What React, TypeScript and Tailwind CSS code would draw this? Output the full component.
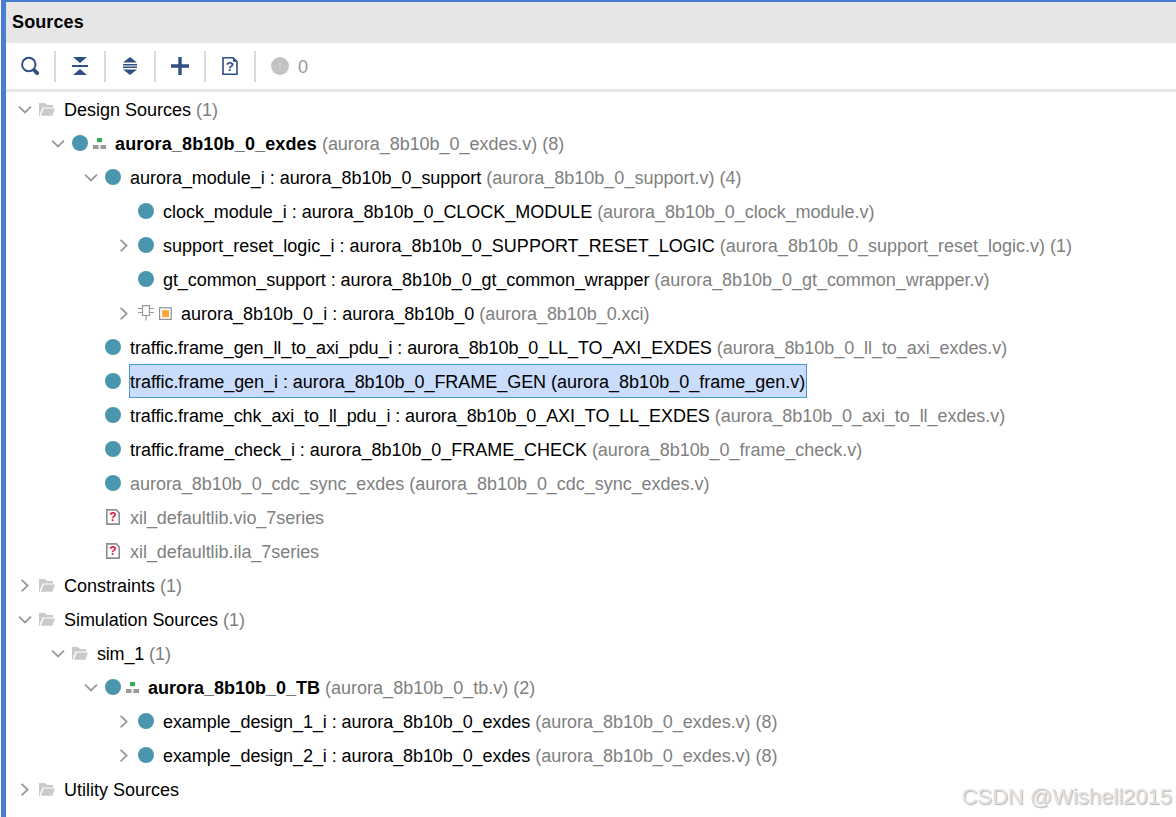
import type { ReactNode } from 'react';
import { clsx } from 'clsx';

type IconKind = 'folder' | 'module' | 'top' | 'ip' | 'missing';

interface SourceRow {
  level: number;
  icon: IconKind;
  name: string;
  detail?: string;
  open?: boolean;
  bold?: boolean;
  muted?: boolean;
  selected?: boolean;
  // letter spacing of the name and of the file part
  nameTracking?: string;
  detailTracking?: string;
}

const rows: SourceRow[] = [
  { level: 0, icon: 'folder', name: 'Design Sources', detail: '(1)', open: true },
  { level: 1, icon: 'top', name: 'aurora_8b10b_0_exdes', detail: '(aurora_8b10b_0_exdes.v) (8)', open: true, bold: true, nameTracking: 'tracking-[0.14px]', detailTracking: 'tracking-[-0.035px]' },
  { level: 2, icon: 'module', name: 'aurora_module_i : aurora_8b10b_0_support', detail: '(aurora_8b10b_0_support.v) (4)', open: true, nameTracking: 'tracking-[-0.025px]' },
  { level: 3, icon: 'module', name: 'clock_module_i : aurora_8b10b_0_CLOCK_MODULE', detail: '(aurora_8b10b_0_clock_module.v)', nameTracking: 'tracking-[-0.025px]', detailTracking: 'tracking-[-0.03px]' },
  { level: 3, icon: 'module', name: 'support_reset_logic_i : aurora_8b10b_0_SUPPORT_RESET_LOGIC', detail: '(aurora_8b10b_0_support_reset_logic.v) (1)', open: false, nameTracking: 'tracking-[0.015px]' },
  { level: 3, icon: 'module', name: 'gt_common_support : aurora_8b10b_0_gt_common_wrapper', detail: '(aurora_8b10b_0_gt_common_wrapper.v)', nameTracking: 'tracking-[-0.077px]', detailTracking: 'tracking-[-0.03px]' },
  { level: 3, icon: 'ip', name: 'aurora_8b10b_0_i : aurora_8b10b_0', detail: '(aurora_8b10b_0.xci)', open: false, detailTracking: 'tracking-[-0.05px]' },
  { level: 2, icon: 'module', name: 'traffic.frame_gen_ll_to_axi_pdu_i : aurora_8b10b_0_LL_TO_AXI_EXDES', detail: '(aurora_8b10b_0_ll_to_axi_exdes.v)', nameTracking: 'tracking-[-0.075px]', detailTracking: 'tracking-[-0.055px]' },
  { level: 2, icon: 'module', name: 'traffic.frame_gen_i : aurora_8b10b_0_FRAME_GEN', detail: '(aurora_8b10b_0_frame_gen.v)', selected: true, nameTracking: 'tracking-[-0.04px]' },
  { level: 2, icon: 'module', name: 'traffic.frame_chk_axi_to_ll_pdu_i : aurora_8b10b_0_AXI_TO_LL_EXDES', detail: '(aurora_8b10b_0_axi_to_ll_exdes.v)', nameTracking: 'tracking-[-0.075px]', detailTracking: 'tracking-[-0.055px]' },
  { level: 2, icon: 'module', name: 'traffic.frame_check_i : aurora_8b10b_0_FRAME_CHECK', detail: '(aurora_8b10b_0_frame_check.v)', nameTracking: 'tracking-[-0.04px]', detailTracking: 'tracking-[-0.03px]' },
  { level: 2, icon: 'module', name: 'aurora_8b10b_0_cdc_sync_exdes', detail: '(aurora_8b10b_0_cdc_sync_exdes.v)', muted: true, nameTracking: 'tracking-[-0.035px]', detailTracking: 'tracking-[-0.03px]' },
  { level: 2, icon: 'missing', name: 'xil_defaultlib.vio_7series', muted: true, nameTracking: 'tracking-[-0.04px]' },
  { level: 2, icon: 'missing', name: 'xil_defaultlib.ila_7series', muted: true, nameTracking: 'tracking-[-0.04px]' },
  { level: 0, icon: 'folder', name: 'Constraints', detail: '(1)', open: false },
  { level: 0, icon: 'folder', name: 'Simulation Sources', detail: '(1)', open: true, nameTracking: 'tracking-[-0.06px]' },
  { level: 1, icon: 'folder', name: 'sim_1', detail: '(1)', open: true, nameTracking: 'tracking-[-0.2px]' },
  { level: 2, icon: 'top', name: 'aurora_8b10b_0_TB', detail: '(aurora_8b10b_0_tb.v) (2)', open: true, bold: true },
  { level: 3, icon: 'module', name: 'example_design_1_i : aurora_8b10b_0_exdes', detail: '(aurora_8b10b_0_exdes.v) (8)', open: false, nameTracking: 'tracking-[-0.075px]', detailTracking: 'tracking-[-0.035px]' },
  { level: 3, icon: 'module', name: 'example_design_2_i : aurora_8b10b_0_exdes', detail: '(aurora_8b10b_0_exdes.v) (8)', open: false, nameTracking: 'tracking-[-0.075px]', detailTracking: 'tracking-[-0.035px]' },
  { level: 0, icon: 'folder', name: 'Utility Sources', open: false },
];

const indents = ['pl-3', 'pl-[45px]', 'pl-[78px]', 'pl-[111px]'];

const Chevron = ({ open }: { open?: boolean }) => (
  <svg className="w-[21px] h-4 shrink-0" viewBox="0 0 21 16" fill="none" stroke="#999999" strokeWidth="1.8">
    {open === true && <path d="M1 5.6 L7 11.4 L13 5.6" />}
    {open === false && <path d="M3.6 2.8 L9.6 8.6 L3.6 14.4" />}
  </svg>
);

const ModuleDot = () => (
  <svg className="size-4 shrink-0" viewBox="0 0 16 16">
    <circle cx="8" cy="8" r="8" fill="#4a96ad" />
  </svg>
);

const FolderIcon = () => (
  <svg className="size-4 shrink-0" viewBox="0 0 16 16" fill="#cacaca">
    <path d="M0 2 H6 L8 4 H14 V6.4 H3.8 L1 12.6 V14.8 H0 Z" />
    <path d="M4.8 7.6 H16 L13.4 14.8 H1.8 Z" />
  </svg>
);

const HierarchyIcon = () => (
  <svg className="w-[13px] h-4 shrink-0 ml-[5px]" viewBox="0 0 13 16">
    <rect x="4" y="3" width="5" height="4.3" fill="#2fae57" />
    <rect x="0" y="10" width="5.6" height="4" fill="#999999" />
    <rect x="7.4" y="10" width="5.6" height="4" fill="#999999" />
  </svg>
);

const IpIcon = () => (
  <svg className="w-[34px] h-4 shrink-0" viewBox="0 0 34 16" fill="none">
    <path d="M4.5 0.7 H11.5 V10.5 H4.5 Z M0 3.5 H4.5 M0 7.5 H4.5 M11.5 3.5 H16 M11.5 7.5 H16 M8 10.5 V15.5" stroke="#999999" strokeWidth="1.2" />
    <rect x="21.6" y="2.8" width="11.6" height="11.6" stroke="#8f8f96" strokeWidth="1.2" />
    <rect x="24" y="5.2" width="7" height="7" fill="#ffa63d" />
  </svg>
);

const MissingIcon = () => (
  <svg className="size-4 shrink-0" viewBox="0 0 16 16" fill="none">
    <path d="M1.8 0.9 H11.2 L14.2 3.9 V15.1 H1.8 Z" stroke="#8e8e93" strokeWidth="1.6" />
    <text x="8" y="12.3" textAnchor="middle" fontSize="12" fontWeight="bold" fill="#e4103d">?</text>
  </svg>
);

const RowIcon = ({ kind }: { kind: IconKind }) => {
  if (kind === 'folder') return <FolderIcon />;
  if (kind === 'ip') return <IpIcon />;
  if (kind === 'missing') return <MissingIcon />;
  return (
    <>
      <ModuleDot />
      {kind === 'top' && <HierarchyIcon />}
    </>
  );
};

const TreeRow = ({ row }: { row: SourceRow }) => (
  <div className={clsx('flex h-[34px] items-center', indents[row.level])}>
    <Chevron open={row.open} />
    <RowIcon kind={row.icon} />
    <div
      className={clsx(
        'flex h-[34px] items-center gap-[5px] whitespace-pre border pt-0.5',
        row.icon === 'ip' ? 'ml-2' : 'ml-[8px]',
        row.selected ? 'border-[#4a9bd4] bg-[#cadcfc] pr-px' : 'border-transparent'
      )}
    >
      <span className={clsx(row.bold && 'font-bold', row.muted ? 'text-[#808080]' : 'text-black', row.nameTracking)}>{row.name}</span>
      {row.detail && <span className={clsx(row.selected ? 'text-black' : 'text-[#808080]', row.detailTracking)}>{row.detail}</span>}
    </div>
  </div>
);

const ToolButton = ({ children }: { children: ReactNode }) => (
  <div className="flex h-[31px] w-[50px] items-center justify-center border-r-2 border-[#dadada]">
    <svg className="size-5" viewBox="0 0 20 20" fill="none">
      {children}
    </svg>
  </div>
);

const Toolbar = () => (
  <div className="flex h-[49px] items-center border-b-[3px] border-[#e6e6e6]">
    <ToolButton>
      <circle cx="8.8" cy="8.5" r="6.7" stroke="#2f4f85" strokeWidth="2" />
      <path d="M14 14 L17.2 17.2" stroke="#2f4f85" strokeWidth="3.8" strokeLinecap="round" />
    </ToolButton>
    <ToolButton>
      <path d="M3 1 H17 L10 7 Z M3 19 H17 L10 13 Z M2 9 H18 V11 H2 Z" fill="#2f4f85" />
    </ToolButton>
    <ToolButton>
      <path d="M3 6.6 H17 L10 1 Z M3 13.4 H17 L10 19 Z M3 8 H17 V9.4 H3 Z M3 10.6 H17 V12 H3 Z" fill="#2f4f85" />
    </ToolButton>
    <ToolButton>
      <path d="M1 10 H19 M10 1 V19" stroke="#2f4f85" strokeWidth="3.4" />
    </ToolButton>
    <ToolButton>
      <path d="M3 1.8 H13 L17 5.8 V18.2 H3 Z" stroke="#2f4f85" strokeWidth="1.6" />
      <path d="M13 1 L17.8 5.8 H13 Z" fill="#2f4f85" />
      <text x="9.9" y="15.2" textAnchor="middle" fontSize="13.5" fontWeight="bold" fill="#2f4f85">?</text>
    </ToolButton>
    <svg className="ml-[15px] size-[18px]" viewBox="0 0 18 18">
      <circle cx="9" cy="9" r="9" fill="#c3c3c3" />
      <path d="M8.2 4 H9.8 V10.5 H8.2 Z M8.2 12 H9.8 V13.8 H8.2 Z" fill="#cecece" />
    </svg>
    <span className="ml-[9px] pt-0.5 text-[#999999]">0</span>
  </div>
);

export default function App() {
  return (
    <div className="relative h-[817px] w-[1176px] overflow-hidden bg-white pl-px font-['Liberation_Sans',Arial,sans-serif] text-[18px] leading-[20px]">
      <div className="h-full border-l-[5px] border-t-2 border-[#4a7dd0]">
        <div className="flex h-[41px] items-center bg-[#e6e6e6] pb-0.5 pl-1.5 font-bold tracking-[0.12px] text-black">Sources</div>
        <Toolbar />
        <div>
          {rows.map((row, i) => (
            <TreeRow key={i} row={row} />
          ))}
        </div>
      </div>
      <div className="absolute right-1 bottom-2 text-[22px] leading-6 text-[#e2e2e2] [text-shadow:1px_1px_1px_#b4b4b4]">
        CSDN @Wishell2015
      </div>
    </div>
  );
}
